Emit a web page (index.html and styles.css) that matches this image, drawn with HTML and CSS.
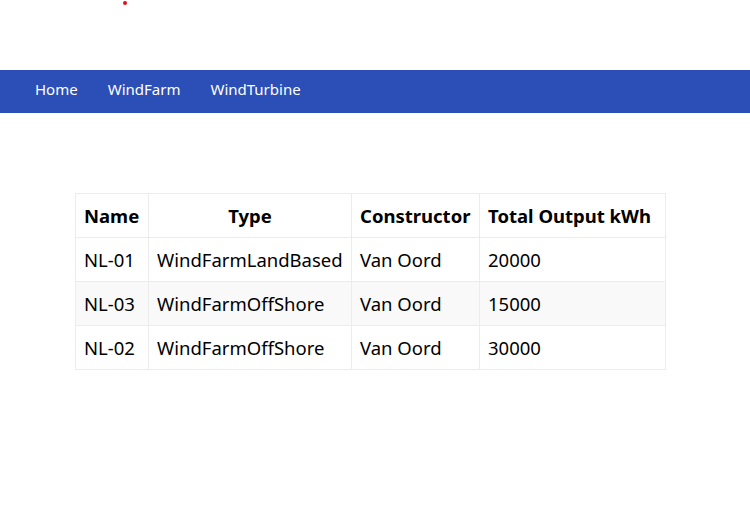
FILE: index.html
```html
<!DOCTYPE html>
<html>
<head>
<meta charset="utf-8">
<link rel="stylesheet" href="styles.css">
</head>
<body>
<div class="top"><span class="dot"></span></div>
<nav class="nav">
  <a class="nav-link" href="#">Home</a>
  <a class="nav-link" href="#">WindFarm</a>
  <a class="nav-link" href="#">WindTurbine</a>
</nav>
<main class="main">
  <table class="grid">
    <colgroup>
      <col class="c1"><col class="c2"><col class="c3"><col class="c4">
    </colgroup>
    <thead>
      <tr><th>Name</th><th class="center">Type</th><th>Constructor</th><th>Total Output kWh</th></tr>
    </thead>
    <tbody>
      <tr><td>NL-01</td><td>WindFarmLandBased</td><td>Van Oord</td><td>20000</td></tr>
      <tr class="alt"><td>NL-03</td><td>WindFarmOffShore</td><td>Van Oord</td><td>15000</td></tr>
      <tr><td>NL-02</td><td>WindFarmOffShore</td><td>Van Oord</td><td>30000</td></tr>
    </tbody>
  </table>
</main>
</body>
</html>
```
FILE: styles.css
```css
html, body { margin: 0; padding: 0; background: #fff; }
body { font-family: "Noto Sans", "Open Sans", sans-serif; color: #000; }
.top { height: 70px; position: relative; }
.dot { position: absolute; left: 123px; top: 1px; width: 4px; height: 4px; border-radius: 50%; background: #e0101a; }
.nav { height: 43px; box-sizing: border-box; padding: 0 0 5px 35px; background: #2b4fb7; display: flex; align-items: center; gap: 30px; }
.nav-link { color: #fff; text-decoration: none; font-size: 15px; line-height: 20px; }
.main { padding: 80px 0 0 75px; }
.grid { border-collapse: collapse; width: 590px; table-layout: fixed; font-size: 18.5px; }
.c1 { width: 73px; } .c2 { width: 203px; } .c3 { width: 128px; } .c4 { width: 186px; }
.grid th, .grid td { border: 1px solid #ececec; height: 43px; padding: 0 8px; text-align: left; white-space: nowrap; }
.grid th { font-weight: 700; }
.grid th.center { text-align: center; }
.grid tr.alt td { background: #f9f9f9; }
```
